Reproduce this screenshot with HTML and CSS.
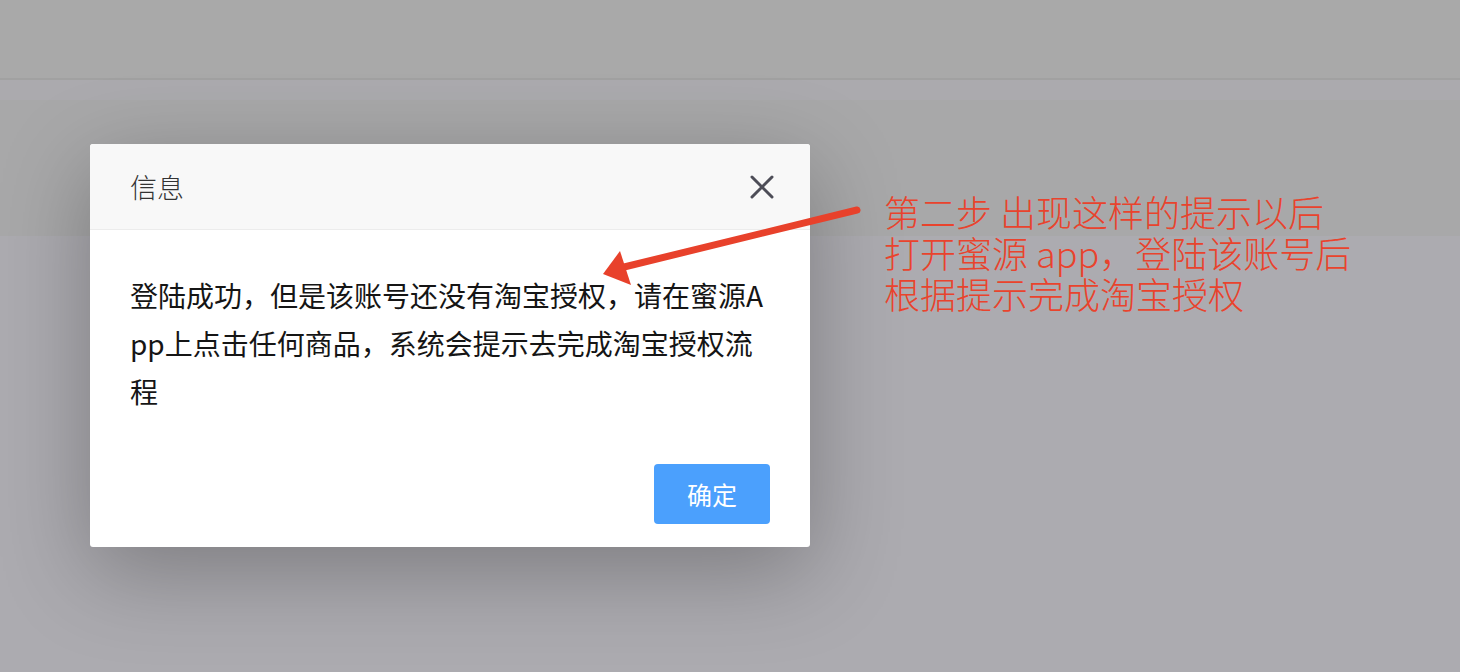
FILE: index.html
```html
<!DOCTYPE html>
<html lang="zh-CN">
<head>
    <meta charset="UTF-8">
    <meta name="viewport" content="width=device-width, initial-scale=1.0">
    <title>信息</title>
    <link rel="stylesheet" href="styles.css">
</head>
<body>
    <div class="page">
        <div class="top-bar"></div>
        <div class="sub-strip"></div>
        <div class="band"></div>
        <div class="rest"></div>

        <div class="dialog">
            <div class="dialog-header">
                <span class="dialog-title">信息</span>
                <svg class="close-icon" width="26" height="26" viewBox="0 0 26 26">
                    <path d="M3 3 L23 23 M23 3 L3 23" stroke="#4d4d57" stroke-width="3" stroke-linecap="round" fill="none"/>
                </svg>
            </div>
            <div class="dialog-body">
                登陆成功，但是该账号还没有淘宝授权，请在蜜源App上点击任何商品，系统会提示去完成淘宝授权流程
            </div>
            <div class="dialog-footer">
                <button class="btn-ok">确定</button>
            </div>
        </div>

        <!-- annotation -->
        <svg class="arrow" width="1460" height="672" viewBox="0 0 1460 672">
            <path d="M857 210 L620 268" stroke="#e8412b" stroke-width="7" stroke-linecap="round" fill="none"/>
            <polygon points="603,274 620,251 631,285" fill="#e8412b"/>
        </svg>
        <div class="note">
            <p>第二步 出现这样的提示以后</p>
            <p>打开蜜源 app，登陆该账号后</p>
            <p>根据提示完成淘宝授权</p>
        </div>
    </div>
</body>
</html>
```

FILE: styles.css
```css
* {
    margin: 0;
    padding: 0;
    box-sizing: border-box;
}

body {
    font-family: "Noto Sans CJK SC", "Noto Sans", sans-serif;
    background: #acabb0;
}

.page {
    position: relative;
    width: 1460px;
    height: 672px;
    overflow: hidden;
}

.top-bar {
    height: 80px;
    background: #a9a9a9;
    border-bottom: 2px solid #a1a1a1;
}

.sub-strip {
    height: 20px;
    background: #abaaae;
}

.band {
    height: 136px;
    background: #a8a8a9;
}

.rest {
    height: 434px;
    background: #acabb0;
}

.dialog {
    position: absolute;
    left: 90px;
    top: 144px;
    width: 720px;
    background: #fff;
    border-radius: 3px;
    box-shadow: 0 24px 90px rgba(0, 0, 0, 0.28);
    overflow: hidden;
}

.dialog-header {
    height: 86px;
    padding: 0 35px 0 40px;
    background: #f8f8f8;
    border-bottom: 1px solid #ececec;
    display: flex;
    justify-content: space-between;
    align-items: center;
}

.dialog-title {
    font-size: 27px;
    font-weight: 300;
    color: #333;
}

.dialog-body {
    padding: 41px 40px 0;
    font-size: 28px;
    line-height: 48px;
    color: #151515;
    word-break: break-all;
}

.dialog-footer {
    display: flex;
    justify-content: flex-end;
    padding: 49px 40px 23px;
}

.btn-ok {
    width: 116px;
    height: 60px;
    border: none;
    border-radius: 4px;
    background: #4ba0fd;
    color: #fff;
    font-family: inherit;
    font-size: 25px;
}

.arrow {
    position: absolute;
    left: 0;
    top: 0;
    pointer-events: none;
}

.note {
    position: absolute;
    left: 884px;
    top: 191px;
    font-size: 36px;
    font-weight: 300;
    line-height: 41px;
    color: #e9432d;
    white-space: nowrap;
}
```
